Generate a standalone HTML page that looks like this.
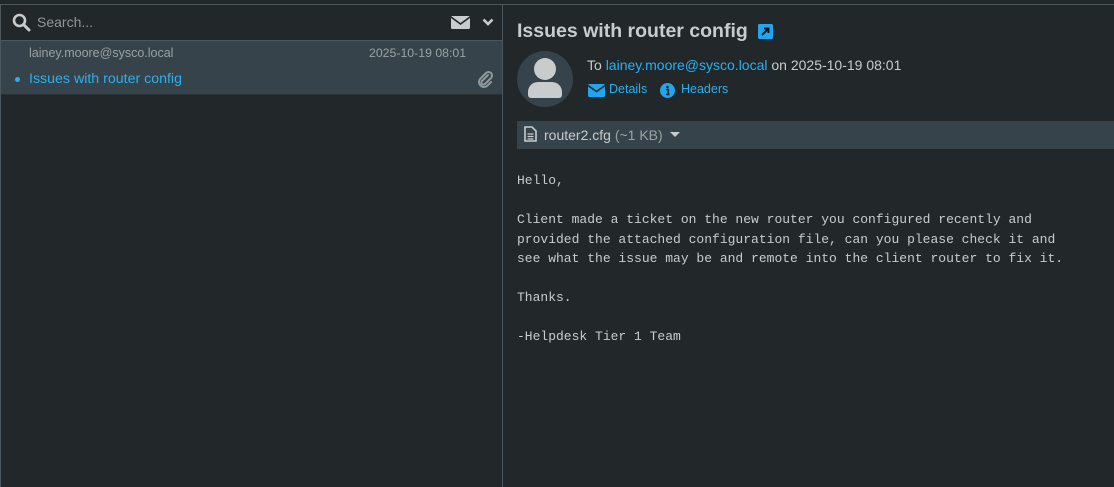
<!DOCTYPE html>
<html><head><style>
body{margin:0;width:1114px;height:487px;background:#222729;font-family:"Liberation Sans",sans-serif;position:relative;overflow:hidden}
.a{position:absolute;white-space:nowrap}
</style></head><body>
<div class="a" style="left:0;top:4px;width:1114px;height:1px;background:#4b575c"></div>
<div class="a" style="left:0;top:4px;width:1px;height:483px;background:#4b575c"></div>
<div class="a" style="left:502px;top:4px;width:1px;height:483px;background:#4b575c"></div>
<svg class="a" style="left:12px;top:13px" width="19" height="19" viewBox="0 0 19 19"><circle cx="7.5" cy="7.5" r="5.5" fill="none" stroke="#c8cccd" stroke-width="2.6"/><path d="M11.5 11.5L17 17" stroke="#c8cccd" stroke-width="3" stroke-linecap="round"/></svg>
<div class="a" style="left:37px;top:14px;font-size:14px;color:#8f9799">Search...</div>
<svg class="a" style="left:451px;top:16px" width="19" height="13" viewBox="0 0 19 13"><rect width="19" height="13" rx="1.5" fill="#c8cccd"/><path d="M0 1l9.5 7 9.5-7" stroke="#222729" stroke-width="1.6" fill="none"/></svg>
<svg class="a" style="left:482px;top:18px" width="12" height="8" viewBox="0 0 12 8"><path d="M1.5 1.5l4.5 4.5 4.5-4.5" stroke="#c8cccd" stroke-width="2.6" fill="none"/></svg>
<div class="a" style="left:1px;top:40px;width:501px;height:1px;background:#4b575c"></div>
<div class="a" style="left:1px;top:41px;width:501px;height:53px;background:#37434a"></div>
<div class="a" style="left:1px;top:94px;width:501px;height:1px;background:#2a3134"></div>
<div class="a" style="left:29px;top:46px;font-size:12.5px;color:#9aa2a4">lainey.moore@sysco.local</div>
<div class="a" style="left:369px;top:46px;font-size:12.3px;color:#9aa2a4">2025-10-19 08:01</div>
<div class="a" style="left:15px;top:77px;width:5px;height:5px;border-radius:50%;background:#2ab0f0"></div>
<div class="a" style="left:29px;top:71px;font-size:14.2px;color:#2ab0f0">Issues with router config</div>
<svg class="a" style="left:476px;top:70px" width="18" height="18" viewBox="0 0 18 18"><path d="M12 5L6 11a2 2 0 0 0 3 3l6-6a3.5 3.5 0 0 0-5-5L4 9a5 5 0 0 0 7 7l4-4" stroke="#8f9a9e" stroke-width="2" fill="none" stroke-linecap="round"/></svg>

<div class="a" style="left:517px;top:20px;font-size:19.5px;font-weight:bold;color:#c8cccd">Issues with router config</div>
<svg class="a" style="left:758px;top:24px" width="15" height="15" viewBox="0 0 15 15"><rect width="15" height="15" rx="1.5" fill="#1ea7f0"/><path d="M4 11L10.5 4.5M6 4.5h4.5v4.5" stroke="#10181b" stroke-width="2" fill="none"/></svg>
<div class="a" style="left:517px;top:51px;width:56px;height:56px;border-radius:50%;background:#37434a;overflow:hidden"><div class="a" style="left:17px;top:7px;width:22px;height:22px;border-radius:50%;background:#c8cccd"></div><div class="a" style="left:11px;top:31px;width:34px;height:16px;border-radius:10px 10px 3px 3px;background:#c8cccd"></div></div>
<div class="a" style="left:587px;top:57px;font-size:14px;color:#c8cccd">To <span style="color:#2ab0f0">lainey.moore@sysco.local</span> on 2025-10-19 08:01</div>
<svg class="a" style="left:588px;top:84px" width="17" height="13" viewBox="0 0 17 13"><rect width="17" height="13" rx="1.5" fill="#1ea7f0"/><path d="M0 1.5l8.5 6 8.5-6" stroke="#222729" stroke-width="1.6" fill="none"/></svg>
<div class="a" style="left:609px;top:82px;font-size:12.5px;color:#2ab0f0">Details</div>
<svg class="a" style="left:660px;top:83px" width="15" height="15" viewBox="0 0 15 15"><circle cx="7.5" cy="7.5" r="7.5" fill="#1ea7f0"/><circle cx="7.5" cy="4" r="1.3" fill="#222729"/><path d="M6 6.5h2.3v5M6 11.5h3.5" stroke="#222729" stroke-width="1.6" fill="none"/></svg>
<div class="a" style="left:681px;top:82px;font-size:12.5px;color:#2ab0f0">Headers</div>
<div class="a" style="left:517px;top:121px;width:597px;height:28px;background:#37434a"></div>
<svg class="a" style="left:524px;top:126px" width="13" height="16" viewBox="0 0 13 16"><path d="M1 1h7l4 4v10H1z" fill="none" stroke="#c8cccd" stroke-width="1.6"/><path d="M3.5 8h6M3.5 10.5h6M3.5 13h6" stroke="#c8cccd" stroke-width="1.3"/></svg>
<div class="a" style="left:544px;top:127px;font-size:14px;color:#c8cccd">router2.cfg <span style="color:#9aa2a4">(~1 KB)</span></div>
<svg class="a" style="left:670px;top:132px" width="10" height="6" viewBox="0 0 10 6"><path d="M0 0h10L5 5z" fill="#c8cccd"/></svg>
<pre class="a" style="white-space:pre;left:517px;top:171px;margin:0;font-family:'Liberation Mono',monospace;font-size:13px;line-height:19.5px;color:#c8cccd">Hello,

Client made a ticket on the new router you configured recently and
provided the attached configuration file, can you please check it and
see what the issue may be and remote into the client router to fix it.

Thanks.

-Helpdesk Tier 1 Team</pre>
</body></html>
